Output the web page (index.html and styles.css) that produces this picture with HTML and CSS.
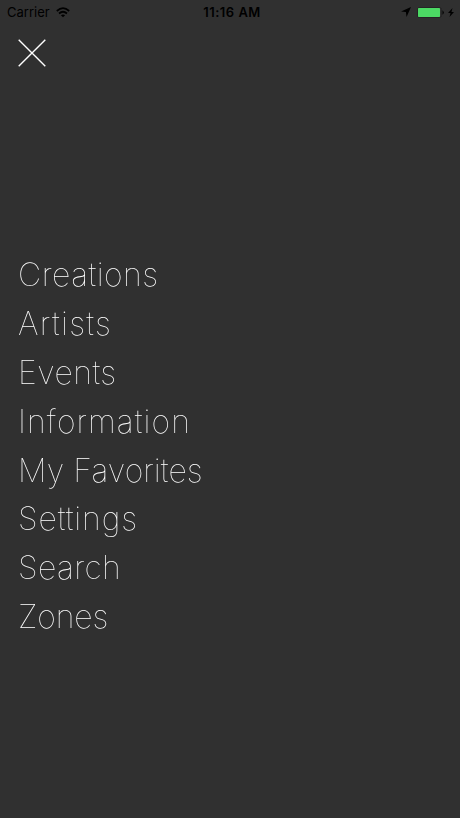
FILE: index.html
```html
<!DOCTYPE html>
<html lang="en"><head><meta charset="utf-8"><title>Menu</title><link rel="stylesheet" href="styles.css"></head>
<body>
<header class="status">
<div class="left"><span class="carrier">Carrier</span><svg class="wifi" width="14" height="11" viewBox="0 0 14 11" fill="none" stroke="#000" stroke-width="1.7"><path d="M.8 4Q7-1.6 13.2 4M3 6.5Q7 3 11 6.5"/><path d="M7 10.3 4.9 8.2Q7 6.6 9.1 8.2Z" fill="#000" stroke="none"/></svg></div>
<time class="time">11:16 AM</time>
<div class="right"><svg width="10" height="10" viewBox="0 0 9 9"><path d="M9 0 5 9 4.4 4.6 0 4Z"/></svg><svg class="battery" width="28" height="11" viewBox="0 0 28 11"><rect x=".5" y=".5" width="24" height="10" rx="2" fill="none" stroke="#242424"/><rect x="1" y="1" width="22" height="9" rx=".7" fill="#4cd964"/><path d="M25.5 3.2q2.6 2.3 0 4.6Z"/></svg><svg class="bolt" width="6" height="9" viewBox="0 0 6 9"><path d="M4.5 0 0 5h2.5L1.5 9 6 4H3.5Z"/></svg></div>
</header>
<button class="close" aria-label="Close"><svg width="28" height="28" viewBox="0 0 28 28" stroke="#fff" stroke-width="1.4"><path d="M.7.7 27.3 27.3M27.3.7.7 27.3"/></svg></button>
<nav class="menu"><a class="creations">Creations</a><a class="artists">Artists</a><a class="events">Events</a><a class="information">Information</a><a class="favorites">My Favorites</a><a class="settings">Settings</a><a class="search">Search</a><a class="zones">Zones</a></nav>
</body></html>
```
FILE: styles.css
```css
* { box-sizing: border-box; }
body { margin: 0; height: 818px; background: #303030; color: #fff; font-family: Inter, sans-serif; overflow: hidden; }
.status { height: 24px; padding: 0 6px 0 7px; display: grid; grid-template-columns: 1fr auto 1fr; align-items: center; color: #000; font-size: 13px; }
.left, .right { display: flex; align-items: center; }
.left { gap: 6px; }
.right { justify-content: flex-end; gap: 6px; }
.bolt { margin-left: -3px; }
.time { font-weight: 600; letter-spacing: .5px; padding-left: 3px; }
.close { display: block; margin: 15px 0 0 18px; padding: 0; border: 0; background: none; width: 28px; height: 28px; }
.close svg { display: block; }
.menu { margin: 184px 0 0 18px; display: flex; flex-direction: column; font-weight: 130; font-size: 32px; will-change: transform; }
.menu a { height: 48.9px; line-height: 48.9px; white-space: nowrap; }
.creations { letter-spacing: .5px; }
.artists { letter-spacing: 1.3px; }
.events { letter-spacing: .5px; }
.information { letter-spacing: 1.1px; }
.favorites { letter-spacing: .1px; }
.settings { letter-spacing: .9px; }
.search { letter-spacing: .4px; }
.zones { letter-spacing: -.1px; }
```
